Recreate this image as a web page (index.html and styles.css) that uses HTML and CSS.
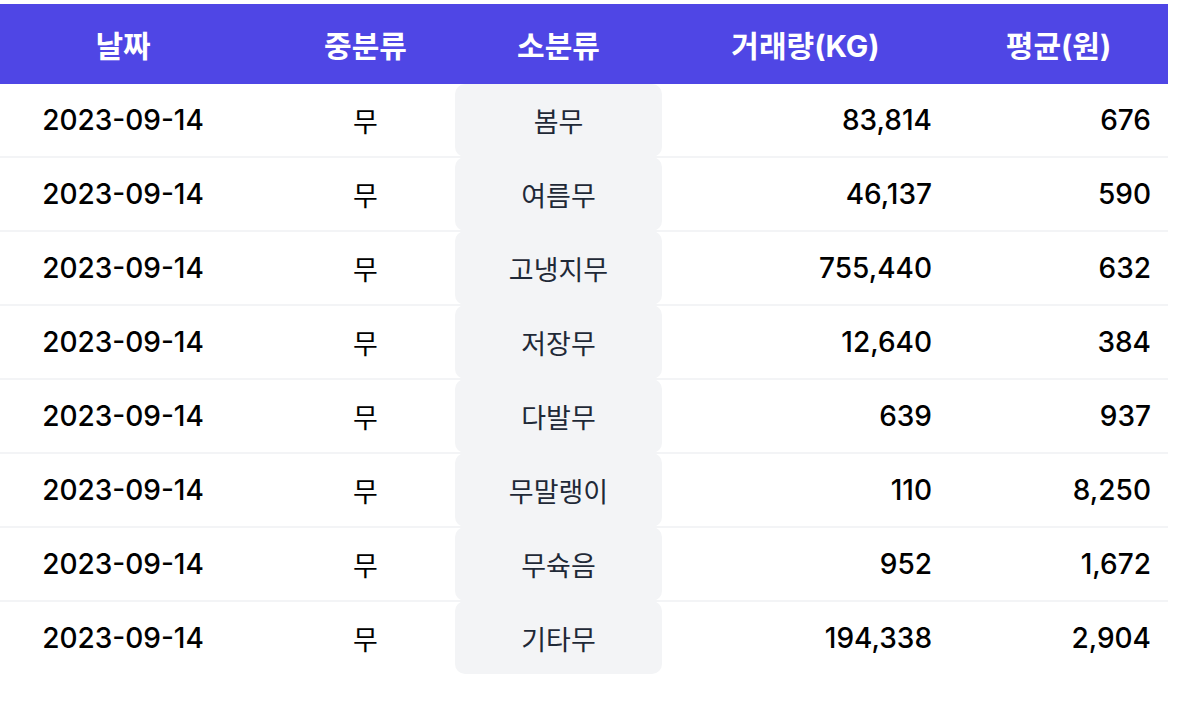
FILE: index.html
```html
<!DOCTYPE html>
<html lang="ko">
<head>
<meta charset="utf-8">
<title>무 거래 현황</title>
<link rel="stylesheet" href="styles.css">
</head>
<body>
<div class="wrap">
  <table class="trade">
    <colgroup>
      <col class="c-date">
      <col class="c-mid">
      <col class="c-sub">
      <col class="c-vol">
      <col class="c-avg">
    </colgroup>
    <thead>
      <tr>
        <th>날짜</th>
        <th class="mid">중분류</th>
        <th>소분류</th>
        <th>거래량(KG)</th>
        <th>평균(원)</th>
      </tr>
    </thead>
    <tbody>
      <tr><td class="date">2023-09-14</td><td class="mid">무</td><td class="sub">봄무</td><td class="num">83,814</td><td class="num">676</td></tr>
      <tr><td class="date">2023-09-14</td><td class="mid">무</td><td class="sub">여름무</td><td class="num">46,137</td><td class="num">590</td></tr>
      <tr><td class="date">2023-09-14</td><td class="mid">무</td><td class="sub">고냉지무</td><td class="num">755,440</td><td class="num">632</td></tr>
      <tr><td class="date">2023-09-14</td><td class="mid">무</td><td class="sub">저장무</td><td class="num">12,640</td><td class="num">384</td></tr>
      <tr><td class="date">2023-09-14</td><td class="mid">무</td><td class="sub">다발무</td><td class="num">639</td><td class="num">937</td></tr>
      <tr><td class="date">2023-09-14</td><td class="mid">무</td><td class="sub">무말랭이</td><td class="num">110</td><td class="num">8,250</td></tr>
      <tr><td class="date">2023-09-14</td><td class="mid">무</td><td class="sub">무슉음</td><td class="num">952</td><td class="num">1,672</td></tr>
      <tr><td class="date">2023-09-14</td><td class="mid">무</td><td class="sub">기타무</td><td class="num">194,338</td><td class="num">2,904</td></tr>
    </tbody>
  </table>
</div>
</body>
</html>
```

FILE: styles.css
```css
html, body {
  margin: 0;
  padding: 0;
  background: #ffffff;
}

body {
  font-family: Inter, "Noto Sans CJK KR", "Noto Sans", sans-serif;
  color: #000000;
}

.wrap {
  padding-top: 4px;
  width: 1168px;
}

.trade {
  width: 1168px;
  table-layout: fixed;
  border-collapse: collapse;
  border-spacing: 0;
}

.c-date { width: 246px; }
.c-mid { width: 209px; }
.c-sub { width: 207px; }
.c-vol { width: 287px; }
.c-avg { width: 219px; }

.trade th {
  height: 80px;
  padding: 0;
  background: #4f46e5;
  color: #ffffff;
  font-size: 30px;
  font-weight: 700;
  text-align: center;
  vertical-align: middle;
}

.trade td {
  height: 72px;
  padding: 0;
  font-size: 28px;
  font-weight: 500;
  text-align: center;
  vertical-align: middle;
}

.trade tbody tr + tr td {
  border-top: 2px solid #f3f4f6;
}

.trade .mid {
  padding-left: 30px;
}

.trade td.mid {
  font-size: 27px;
  font-weight: 400;
}

.trade td.sub {
  background: #f3f4f6;
  border-radius: 10px;
  color: #1f2937;
  font-size: 27px;
  font-weight: 400;
}

.trade td.num {
  text-align: right;
  padding-right: 17px;
}
```
